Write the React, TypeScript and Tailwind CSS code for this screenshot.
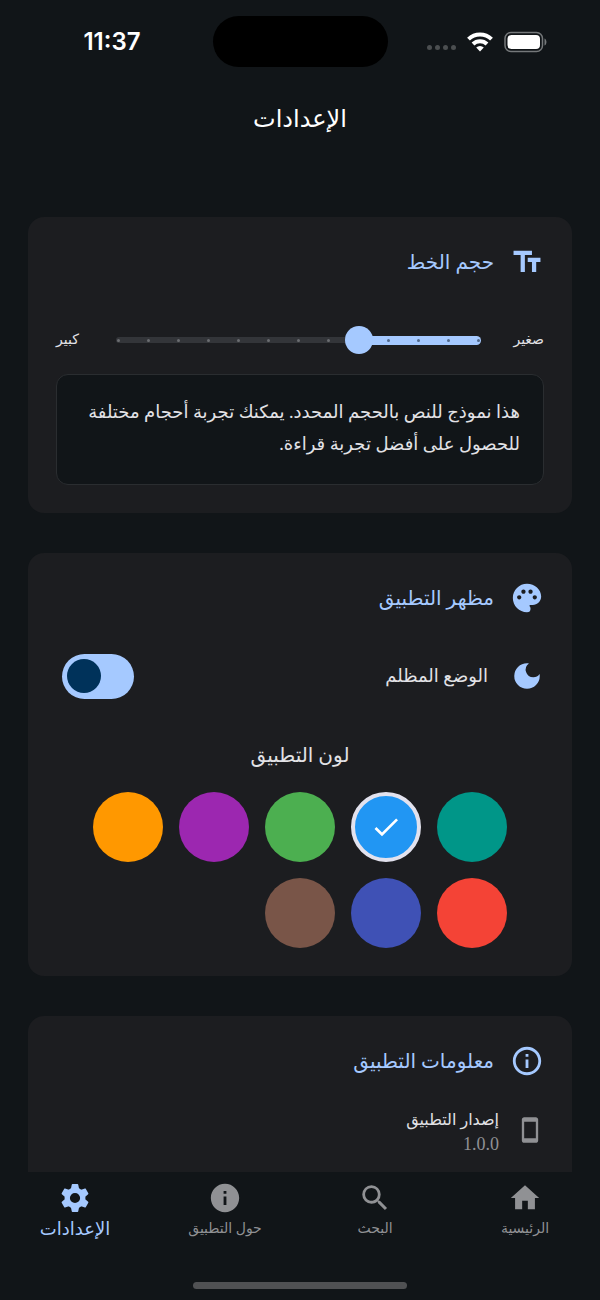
import { useState } from "react";
import type { ReactNode } from "react";
import {
  MdCheck,
  MdDarkMode,
  MdHome,
  MdInfo,
  MdInfoOutline,
  MdPalette,
  MdSearch,
  MdSmartphone,
  MdTextFields,
} from "react-icons/md";

const GearIcon = ({ size }: { size: number }) => {
  return (
    <svg width={size} height={size} viewBox="0 0 24 24" fill="currentColor">
      <circle cx="12" cy="12" r="5.5" fill="none" stroke="currentColor" strokeWidth="3.8" />
      {[0, 60, 120, 180, 240, 300].map((angle) => (
        <path
          key={angle}
          d="M10.2 2.200h3.600c.25 0 .45.18.5.42l.9 4.300H8.800l.9-4.300c.05-.24.25-.42.5-.42z"
          transform={`rotate(${angle} 12 12)`}
        />
      ))}
    </svg>
  );
};

const colors = [
  { name: "أخضر مزرق", style: "bg-[#009688]" },
  { name: "أزرق", style: "bg-[#2196f3]" },
  { name: "أخضر", style: "bg-[#4caf50]" },
  { name: "بنفسجي", style: "bg-[#9c27b0]" },
  { name: "برتقالي", style: "bg-[#ff9800]" },
  { name: "أحمر", style: "bg-[#f44336]" },
  { name: "نيلي", style: "bg-[#3f51b5]" },
  { name: "بني", style: "bg-[#795548]" },
];

const tabs = [
  { label: "الرئيسية", icon: MdHome },
  { label: "البحث", icon: MdSearch },
  { label: "حول التطبيق", icon: MdInfo },
  { label: "الإعدادات", icon: GearIcon },
];

const STEPS = 12;

const StatusBar = () => {
  return (
    <div dir="ltr" className="grid grid-cols-3 items-center pt-4">
      <div className="pl-6 text-center font-['Inter',sans-serif] text-2xl font-semibold text-white">
        11:37
      </div>
      <div className="mx-auto h-[51px] w-[175px] rounded-full bg-black" />
      <div className="flex items-center justify-center gap-[11px] pr-[26px]">
        <div className="flex gap-[3px] pt-3">
          <span className="size-[5px] rounded-sm bg-[#4b4e50]" />
          <span className="size-[5px] rounded-sm bg-[#4b4e50]" />
          <span className="size-[5px] rounded-sm bg-[#4b4e50]" />
          <span className="size-[5px] rounded-sm bg-[#4b4e50]" />
        </div>
        <svg width="26" height="20" viewBox="0 0 26 20" fill="none" stroke="#fff" strokeWidth="4">
          <path d="M1.5 7.2a16.3 16.3 0 0 1 23 0" />
          <path d="M6 12a10 10 0 0 1 14 0" />
          <path d="M13 19.6l-3.8-4a5.4 5.4 0 0 1 7.600 0z" fill="#fff" stroke="none" />
        </svg>
        <svg width="43" height="22" viewBox="0 0 43 22">
          <rect x="1" y="1.5" width="37.500" height="19" rx="6" fill="none" stroke="#75787a" strokeWidth="1.500" />
          <rect x="3.500" y="4" width="32.500" height="14" rx="4" fill="#fff" />
          <path d="M40.500 7.500c2.600 1 2.600 6 0 7z" fill="#75787a" />
        </svg>
      </div>
    </div>
  );
};

const Card = ({ icon, title, children }: { icon: ReactNode; title: string; children: ReactNode }) => {
  return (
    <section className="rounded-2xl bg-[#1c1d20] p-7">
      <h2 className="flex items-center gap-4 text-xl leading-[34px] text-[#a5c9ff]">
        {icon}
        {title}
      </h2>
      {children}
    </section>
  );
};

const FontSize = () => {
  const [size, setSize] = useState(4);

  return (
    <Card icon={<MdTextFields size={34} />} title="حجم الخط">
      <div className="mt-9 flex h-[50px] items-center text-sm text-[#e2e2e6]">
        <span className="w-[51px]">صغير</span>
        <div className="relative flex h-7 flex-1 items-center">
          <div className="absolute inset-x-3 h-[6px] rounded-full bg-[#333539]" />
          <div
            className="absolute right-3 h-[9px] rounded-full bg-[#a5c9ff]"
            style={{ width: `${(size / STEPS) * 100}%` }}
          />
          <div className="absolute inset-x-3 flex justify-between px-px">
            {Array.from({ length: STEPS + 1 }, (_, i) => (
              <span
                key={i}
                className={`size-[3px] rounded-full ${i < size ? "bg-[#50688a]" : "bg-[#6b6d71]"}`}
              />
            ))}
          </div>
          <input
            type="range"
            aria-label="حجم الخط"
            min={0}
            max={STEPS}
            value={size}
            onChange={(e) => setSize(Number(e.target.value))}
            className="relative h-7 w-full appearance-none bg-transparent [&::-webkit-slider-thumb]:size-7 [&::-webkit-slider-thumb]:appearance-none [&::-webkit-slider-thumb]:rounded-full [&::-webkit-slider-thumb]:bg-[#a5c9ff]"
          />
        </div>
        <span className="w-12 text-left">كبير</span>
      </div>
      <p className="mt-[9px] rounded-xl border border-[#2a2d30] bg-[#111518] px-[23px] pt-[21px] pb-6 text-lg leading-8 text-[#e2e2e6]">
        هذا نموذج للنص بالحجم المحدد. يمكنك تجربة أحجام مختلفة للحصول على أفضل تجربة قراءة.
      </p>
    </Card>
  );
};

const Appearance = () => {
  const [color, setColor] = useState("أزرق");

  return (
    <Card icon={<MdPalette size={34} />} title="مظهر التطبيق">
      <label className="mt-[35px] flex h-[52px] items-center gap-[22px] pl-[6px] text-lg text-[#e2e2e6]">
        <MdDarkMode size={34} className="text-[#a5c9ff]" />
        <span className="flex-1">الوضع المظلم</span>
        <input
          type="checkbox"
          role="switch"
          defaultChecked
          className="flex h-[45px] w-[72px] appearance-none items-center rounded-full bg-[#333539] px-[5px] before:size-[34px] before:rounded-full before:bg-[#8e9094] checked:justify-end checked:bg-[#a5c9ff] checked:before:bg-[#00325a]"
        />
      </label>
      <fieldset>
        <legend className="mx-auto pt-9 pb-5 text-xl leading-[34px] text-[#e2e2e6]">لون التطبيق</legend>
        <div className="mx-auto flex max-w-[414px] flex-wrap gap-4">
          {colors.map((item) => (
            <label key={item.name} className="relative size-[70px]">
              <input
                type="radio"
                name="color"
                aria-label={item.name}
                checked={color === item.name}
                onChange={() => setColor(item.name)}
                className={`block size-full appearance-none rounded-full border-[#e2e2ee] checked:border-4 ${item.style}`}
              />
              {color === item.name && (
                <MdCheck size={32} className="absolute inset-0 m-auto text-white" />
              )}
            </label>
          ))}
        </div>
      </fieldset>
    </Card>
  );
};

const AppInfo = () => {
  return (
    <Card icon={<MdInfoOutline size={34} />} title="معلومات التطبيق">
      <div className="mt-7 flex items-center gap-[17px] pb-6">
        <MdSmartphone size={28} className="text-[#909194]" />
        <div>
          <div className="text-base leading-7 text-[#e2e2e6]">إصدار التطبيق</div>
          <div className="text-lg leading-5 text-[#909194]">1.0.0</div>
        </div>
      </div>
    </Card>
  );
};

const TabBar = () => {
  return (
    <nav className="bg-[#111518]">
      <div className="grid grid-cols-4">
        {tabs.map(({ label, icon: Icon }) => (
          <button
            key={label}
            className={`flex h-[76px] flex-col items-center pt-[9px] ${
              label === "الإعدادات" ? "text-lg text-[#a5c9ff]" : "text-sm text-[#909194]"
            }`}
          >
            <Icon size={34} />
            <span className="leading-7">{label}</span>
          </button>
        ))}
      </div>
      <div className="mx-auto mt-[34px] mb-[11px] h-[7px] w-[214px] rounded-full bg-[#505153]" />
    </nav>
  );
};

const App = () => {
  return (
    <div
      dir="rtl"
      className="flex h-screen flex-col bg-[#111518] font-['Liberation_Serif','DejaVu_Sans',serif]"
    >
      <StatusBar />
      <h1 className="pt-8 text-center text-2xl leading-10 text-white">الإعدادات</h1>
      <main className="mt-[78px] flex flex-1 flex-col gap-10 overflow-hidden px-7">
        <FontSize />
        <Appearance />
        <AppInfo />
      </main>
      <TabBar />
    </div>
  );
};

export default App;
